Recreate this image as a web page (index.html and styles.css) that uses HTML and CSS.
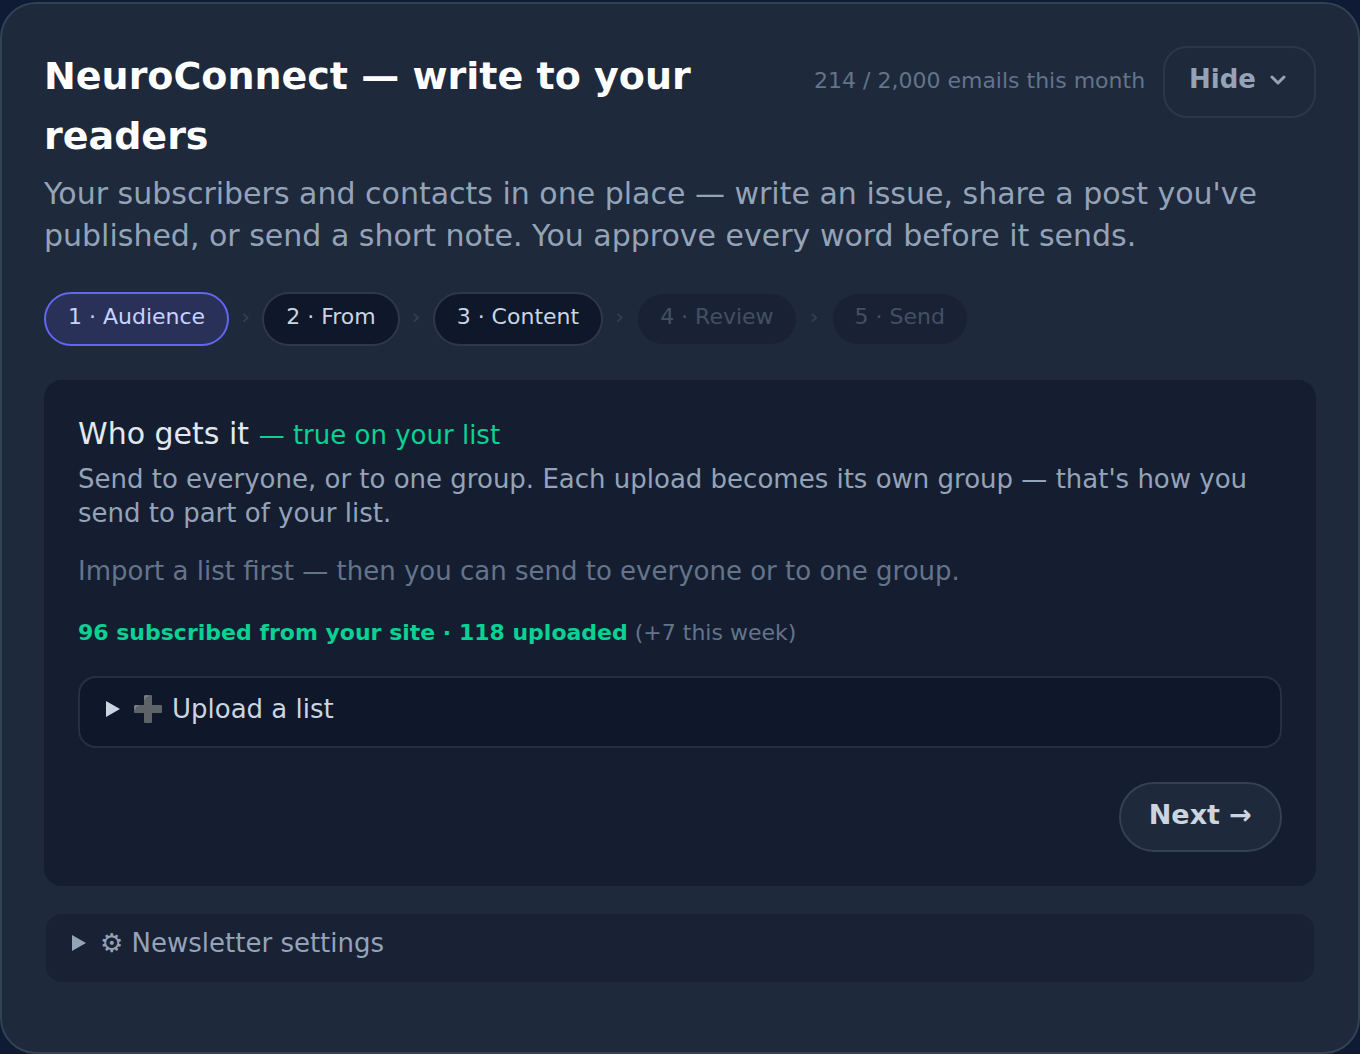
FILE: index.html
```html
<!DOCTYPE html>
<html lang="en">
<head>
    <meta charset="UTF-8">
    <meta name="viewport" content="width=device-width, initial-scale=1.0">
    <title>NeuroConnect</title>
    <link rel="stylesheet" href="styles.css">
</head>
<body>
    <main class="card">
        <header class="card-header">
            <h1>NeuroConnect — write to your readers</h1>
            <div class="header-side">
                <span class="usage">214 / 2,000 emails this month</span>
                <button type="button" class="hide-btn">
                    Hide
                    <svg class="chevron" viewBox="0 0 20 20" aria-hidden="true">
                        <path d="M4 8l6 6 6-6" fill="none" stroke="currentColor" stroke-width="3" stroke-linecap="round" stroke-linejoin="round"/>
                    </svg>
                </button>
            </div>
        </header>
        <p class="lead">Your subscribers and contacts in one place — write an issue, share a post you've published, or send a short note. You approve every word before it sends.</p>

        <nav class="steps" aria-label="Steps">
            <button type="button" class="step active">1 · Audience</button>
            <span class="sep">›</span>
            <button type="button" class="step">2 · From</button>
            <span class="sep">›</span>
            <button type="button" class="step">3 · Content</button>
            <span class="sep">›</span>
            <button type="button" class="step" disabled>4 · Review</button>
            <span class="sep">›</span>
            <button type="button" class="step" disabled>5 · Send</button>
        </nav>

        <section class="panel">
            <h2>Who gets it <span class="note">— true on your list</span></h2>
            <p class="hint">Send to everyone, or to one group. Each upload becomes its own group — that's how you send to part of your list.</p>
            <p class="empty">Import a list first — then you can send to everyone or to one group.</p>
            <p class="stats"><strong>96 subscribed from your site · 118 uploaded</strong> (+7 this week)</p>
            <details class="box upload">
                <summary>
                    <svg class="marker" viewBox="0 0 14 18" aria-hidden="true"><path d="M0 1l14 8-14 8z" fill="currentColor"/></svg>
                    <svg class="plus" viewBox="0 0 28 28" aria-hidden="true">
                        <path d="M11 0h6q1 0 1 1v9h9q1 0 1 1v6q0 1-1 1h-9v9q0 1-1 1h-6q-1 0-1-1v-9H1q-1 0-1-1v-6q0-1 1-1h9V1q0-1 1-1z" fill="#5e6367"/>
                        <path d="M11 4V1h3M1 14v-3h3" fill="none" stroke="#8d9296" stroke-width="1" stroke-linecap="round"/>
                    </svg>
                    <span>Upload a list</span>
                </summary>
            </details>
            <div class="actions">
                <button type="button" class="next-btn">Next →</button>
            </div>
        </section>

        <details class="box settings">
            <summary>
                <svg class="marker" viewBox="0 0 14 18" aria-hidden="true"><path d="M0 1l14 8-14 8z" fill="currentColor"/></svg>
                <span>⚙ Newsletter settings</span>
            </summary>
        </details>
    </main>
</body>
</html>
```

FILE: styles.css
```css
* {
    box-sizing: border-box;
}
body {
    margin: 0;
    padding-top: 2px;
    min-height: 100vh;
    display: flex;
    background-color: #0f1a34;
    font-family: "DejaVu Sans", Verdana, sans-serif;
    color: #e2e8f0;
}
h1, h2, p {
    margin: 0;
}
button {
    font-family: inherit;
    cursor: pointer;
}
.card {
    flex: 1;
    padding: 42px;
    border: 2px solid #334155;
    border-radius: 36px;
    background-color: #1e293b;
}
.card-header {
    display: flex;
    align-items: flex-start;
    justify-content: space-between;
    gap: 24px;
}
h1 {
    flex: 1;
    font-size: 38px;
    line-height: 60px;
    color: #fff;
}
.header-side {
    display: flex;
    align-items: center;
    gap: 18px;
}
.usage {
    padding-bottom: 2px;
    font-size: 22px;
    line-height: 34px;
    color: #64748b;
}
.hide-btn {
    display: flex;
    align-items: center;
    gap: 12px;
    height: 72px;
    padding: 0 26px 6px 24px;
    border: 2px solid #2b384b;
    border-radius: 24px;
    background: none;
    color: #94a3b8;
    font-size: 26px;
    font-weight: bold;
}
.chevron {
    width: 20px;
    height: 20px;
}
.lead {
    margin-top: 7px;
    font-size: 30px;
    line-height: 42px;
    color: #94a3b8;
}
.steps {
    display: flex;
    flex-wrap: wrap;
    align-items: center;
    margin-top: 35px;
}
.step {
    height: 54px;
    padding: 0 22px 6px;
    border: 2px solid #2d394b;
    border-radius: 27px;
    background-color: #0f172a;
    color: #cbd5e1;
    font-size: 22px;
}
.step.active {
    border-color: #6366f1;
    background-color: #2a3158;
    color: #c7d2fe;
}
.step:disabled {
    border-color: transparent;
    background-color: #192234;
    background-clip: padding-box;
    color: #435064;
    cursor: default;
}
.sep {
    width: 33px;
    padding-bottom: 6px;
    text-align: center;
    font-size: 22px;
    color: #334155;
}
.panel {
    margin-top: 34px;
    padding: 34px;
    border-radius: 18px;
    background-color: #151e30;
}
h2 {
    font-size: 30px;
    font-weight: normal;
    line-height: 40px;
}
.note {
    font-size: 26px;
    color: #0bd193;
}
.hint {
    margin-top: 7px;
    font-size: 26px;
    line-height: 34px;
    color: #94a3b8;
}
.empty {
    margin-top: 24px;
    font-size: 26px;
    line-height: 34px;
    color: #64748b;
}
.stats {
    margin-top: 28px;
    font-size: 22px;
    line-height: 34px;
    color: #64748b;
}
.stats strong {
    color: #0bd193;
}
.box {
    border: 2px solid #253043;
    border-radius: 18px;
    font-size: 26px;
}
.box summary {
    display: flex;
    align-items: center;
    padding: 14px 26px 20px;
    line-height: 34px;
    list-style: none;
    cursor: pointer;
}
.marker {
    width: 14px;
    height: 18px;
    margin-right: 14px;
}
.plus {
    width: 28px;
    height: 28px;
    margin-right: 10px;
}
.upload {
    margin-top: 26px;
    background-color: #0f172a;
    color: #cbd5e1;
}
.actions {
    display: flex;
    justify-content: flex-end;
    margin-top: 34px;
}
.next-btn {
    height: 70px;
    padding: 0 28px 6px;
    border: 2px solid #334155;
    border-radius: 35px;
    background-color: #1e293b;
    color: #cbd5e1;
    font-size: 27px;
    font-weight: bold;
}
.settings {
    margin-top: 26px;
    border-color: transparent;
    background-color: #192234;
    background-clip: padding-box;
    color: #94a3b8;
}
.settings summary {
    padding-top: 12px;
    padding-bottom: 22px;
}
```
